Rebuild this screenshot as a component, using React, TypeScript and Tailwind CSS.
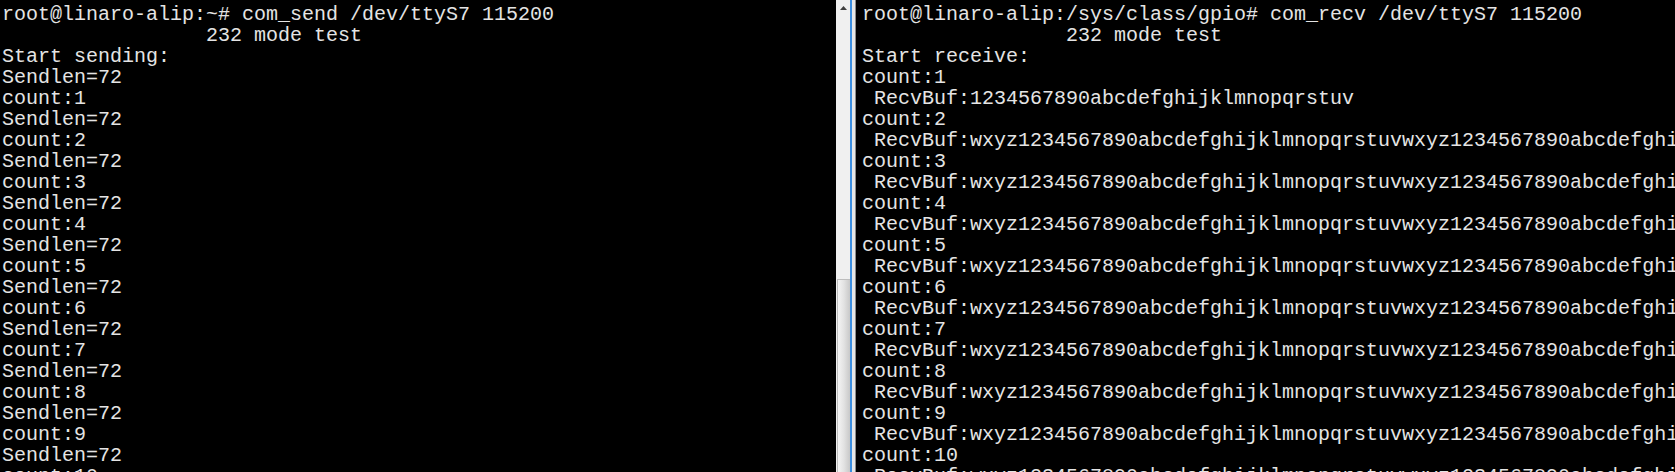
const mono = { fontFamily: '"Liberation Mono", "Courier New", monospace' };

const leftLines = [
  'root@linaro-alip:~# com_send /dev/ttyS7 115200',
  '                 232 mode test',
  'Start sending:',
];
for (let i = 1; i <= 10; i++) {
  leftLines.push('Sendlen=72');
  leftLines.push(`count:${i}`);
}

const tail = 'wxyz1234567890abcdefghijklmnopqrstuvwxyz1234567890abcdefghijklmnopqrstuv';
const rightLines = [
  'root@linaro-alip:/sys/class/gpio# com_recv /dev/ttyS7 115200',
  '                 232 mode test',
  'Start receive:',
  'count:1',
  ' RecvBuf:1234567890abcdefghijklmnopqrstuv',
];
for (let i = 2; i <= 10; i++) {
  rightLines.push(`count:${i}`);
  rightLines.push(` RecvBuf:${tail}`);
}

function Pane({ lines, className }: { lines: string[]; className: string }) {
  return (
    <div className={`h-full overflow-hidden bg-black pt-[4px] text-[20px] leading-[21px] text-[#e4e4e4] whitespace-pre ${className}`} style={mono}>
      {lines.map((l, i) => (
        <div key={i}>{l}</div>
      ))}
    </div>
  );
}

export default function App() {
  return (
    <div className="flex h-[472px] w-[1675px] overflow-hidden bg-black">
      <Pane lines={leftLines} className="w-[836px] shrink-0 pl-[2px]" />

      {/* scrollbar */}
      <div className="flex w-[14px] shrink-0 flex-col bg-[#f0f0f0]">
        <div className="flex h-[16px] items-center justify-center">
          <svg width="7" height="4" viewBox="0 0 7 4">
            <path d="M0 4 L3.5 0 L7 4 Z" fill="#404040" />
          </svg>
        </div>
        <div className="flex-1" />
        <div className="ml-[1px] h-[193px] border-t border-l border-[#bdbdbd] bg-gradient-to-r from-[#f4f4f4] via-[#e2e2e2] to-[#c8c8c8]" />
      </div>
      <div className="w-[2px] shrink-0 bg-[#3b8ee0]" />
      <div className="w-[4px] shrink-0 border-r border-[#8a8a8a] bg-[#e6e6e6]" />

      <Pane lines={rightLines} className="flex-1 pl-[6px]" />
    </div>
  );
}
